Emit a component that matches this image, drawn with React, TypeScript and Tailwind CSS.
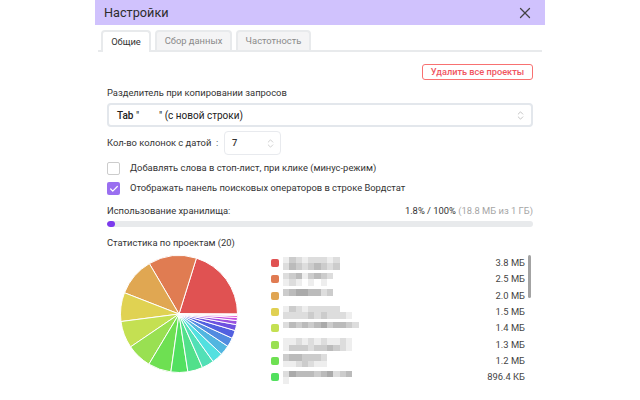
import React from "react";
import { X, ChevronsUpDown, Check } from "lucide-react";

const sizes = [3.8, 2.5, 2.0, 1.5, 1.4, 1.3, 1.2, 0.875, 0.78, 0.63, 0.57, 0.52, 0.47, 0.42, 0.31, 0.21, 0.16, 0.1, 0.05, 0.03];

const legend = [
  { value: "3.8 МБ", color: "#e05252", cells: ["ecdeddded", "dbcdcbcdc"] },
  { value: "2.5 МБ", color: "#e07b52", cells: ["dcbecbcd", "edefefe"] },
  { value: "2.0 МБ", color: "#e0a552", cells: ["cbaabbdc", "  f"] },
  { value: "1.5 МБ", color: "#e0d052", cells: ["ecdedddddf", "ddddcdcddde"] },
  { value: "1.4 МБ", color: "#c4e052", cells: ["dbcbcbacbbcd", "fffffffffff"] },
  { value: "1.3 МБ", color: "#99e052", cells: ["eedededeedef", "ecccdccbcdef"] },
  { value: "1.2 МБ", color: "#6ee052", cells: ["cbbcccdf", "eedcdeef"] },
  { value: "896.4 КБ", color: "#52e05e", cells: ["dabbbcbadcb", "ef"] },
];

function Pie() {
  const cx = 60;
  const cy = 60;
  const r = 58.5;
  const total = sizes.reduce((a, b) => a + b, 0);
  let angle = 0;
  const slices = sizes.map((s, i) => {
    const next = angle + (s / total) * Math.PI * 2;
    const x1 = cx + r * Math.cos(angle);
    const y1 = cy - r * Math.sin(angle);
    const x2 = cx + r * Math.cos(next);
    const y2 = cy - r * Math.sin(next);
    const large = next - angle > Math.PI ? 1 : 0;
    angle = next;
    return (
      <path
        key={i}
        d={`M${cx} ${cy}L${x1} ${y1}A${r} ${r} 0 ${large} 0 ${x2} ${y2}Z`}
        fill={`hsl(${i * 18}, 70%, 60%)`}
        stroke="#fff"
        strokeWidth="1"
      />
    );
  });
  return (
    <svg width="120" height="120" viewBox="0 0 120 120" className="shrink-0">
      {slices}
    </svg>
  );
}

function BlurName({ cells }: { cells: string[] }) {
  return (
    <div className="flex flex-col w-[90px] blur-[0.6px]">
      {cells.map((line, i) => (
        <div key={i} className="flex h-[6.5px]">
          {line.split("").map((c, j) => (
            <div
              key={j}
              className="w-[6.3px] h-full"
              style={{ backgroundColor: c === " " ? "transparent" : `#${c}${c}${c}` }}
            />
          ))}
        </div>
      ))}
    </div>
  );
}

export default function App() {
  return (
    <div className="w-[640px] h-[400px] bg-white overflow-hidden font-['Roboto',sans-serif] text-[9.4px] text-[#333]">
      <div className="w-[450px] h-full mx-auto">
        <div className="h-[25px] bg-[#d0c2fd] flex items-center justify-between pl-[9px] pr-[11px]">
          <span className="text-[12.7px] text-[#2c2c2c]">Настройки</span>
          <X className="w-[18px] h-[18px] text-[#444]" strokeWidth={1.7} />
        </div>

        <div className="mt-[5px] ml-[3px] w-[444px] h-[22px] flex gap-1 pl-[3px] border-b-2 border-[#e8eaec]">
          <div className="w-[50px] h-[22px] flex items-center justify-center bg-white border-2 border-b-0 border-[#e8eaec] rounded-t-[4px] text-[#333]">
            Общие
          </div>
          <div className="w-[77px] h-[20px] flex items-center justify-center bg-[#f4f4f5] border-2 border-b-0 border-[#e8eaec] rounded-t-[4px] text-[#8a8a8a]">
            Сбор данных
          </div>
          <div className="w-[75px] h-[20px] flex items-center justify-center bg-[#f4f4f5] border-2 border-b-0 border-[#e8eaec] rounded-t-[4px] text-[#8a8a8a]">
            Частотность
          </div>
        </div>

        <div className="px-3">
          <div className="flex justify-end mt-[12px]">
            <div className="w-[111px] h-[16px] flex items-center justify-center border border-[#f87171] rounded-[3px] text-[#f0555f] font-medium text-[9.2px]">
              Удалить все проекты
            </div>
          </div>

          <div className="mt-[6px] h-[14px] leading-[14px]">Разделитель при копировании запросов</div>
          <div className="mt-[3px] h-[24px] flex items-center justify-between pl-[8px] pr-[5px] border-2 border-[#e3e7ec] rounded-[4px]">
            <span className="whitespace-pre text-[#222] text-[10px]">
              <span className="font-medium">Tab</span>
              {' "        " (с новой строки)'}
            </span>
            <ChevronsUpDown className="w-[11px] h-[11px] text-[#aaa]" strokeWidth={1.5} />
          </div>

          <div className="mt-[4px] h-[24px] flex items-center">
            <span className="w-[117px] whitespace-pre">{"Кол-во колонок с датой  :"}</span>
            <div className="w-[57px] h-[24px] flex items-center justify-between pl-[7px] pr-[4px] border border-[#e8eaee] rounded-[4px]">
              <span className="font-medium">7</span>
              <ChevronsUpDown className="w-[11px] h-[11px] text-[#bbb]" strokeWidth={1.5} />
            </div>
          </div>

          <div className="mt-[7px] h-[13px] flex items-center gap-[10px]">
            <div className="w-[13px] h-[13px] border border-[#ccc] rounded-[2px]" />
            <span>Добавлять слова в стоп-лист, при клике (минус-режим)</span>
          </div>
          <div className="mt-[7px] h-[13px] flex items-center gap-[10px]">
            <div className="w-[13px] h-[13px] bg-[#9a6ff0] rounded-[2px] flex items-center justify-center">
              <Check className="w-[10px] h-[10px] text-white" strokeWidth={3} />
            </div>
            <span>Отображать панель поисковых операторов в строке Вордстат</span>
          </div>

          <div className="mt-[9px] h-[14px] flex justify-between items-center">
            <span>Использование хранилища:</span>
            <span>
              1.8% / 100% <span className="text-[#a5a5a5]">(18.8 МБ из 1 ГБ)</span>
            </span>
          </div>
          <div className="mt-[3px] h-[6px] bg-[#e8eaec] rounded-full overflow-hidden">
            <div className="w-[8px] h-full bg-[#7c3aed] rounded-full" />
          </div>

          <div className="mt-[9px] h-[14px] leading-[14px]">Статистика по проектам (20)</div>

          <div className="mt-[4px] flex">
            <div className="ml-[12px]">
              <Pie />
            </div>
            <div className="ml-[32px] flex-1 flex mt-[1px]">
              <div className="flex-1 flex flex-col">
                {legend.map((row) => (
                  <div key={row.value} className="h-[16.3px] flex items-center justify-between">
                    <div className="flex items-center gap-[4px]">
                      <div className="w-[8px] h-[8px] rounded-[2px]" style={{ backgroundColor: row.color }} />
                      <BlurName cells={row.cells} />
                    </div>
                    <span className="text-[#444]">{row.value}</span>
                  </div>
                ))}
              </div>
              <div className="ml-[3px] w-[2.5px] h-[43px] bg-[#a3a3a3] rounded-full" />
              <div className="w-[2.5px]" />
            </div>
          </div>
        </div>
      </div>
    </div>
  );
}
